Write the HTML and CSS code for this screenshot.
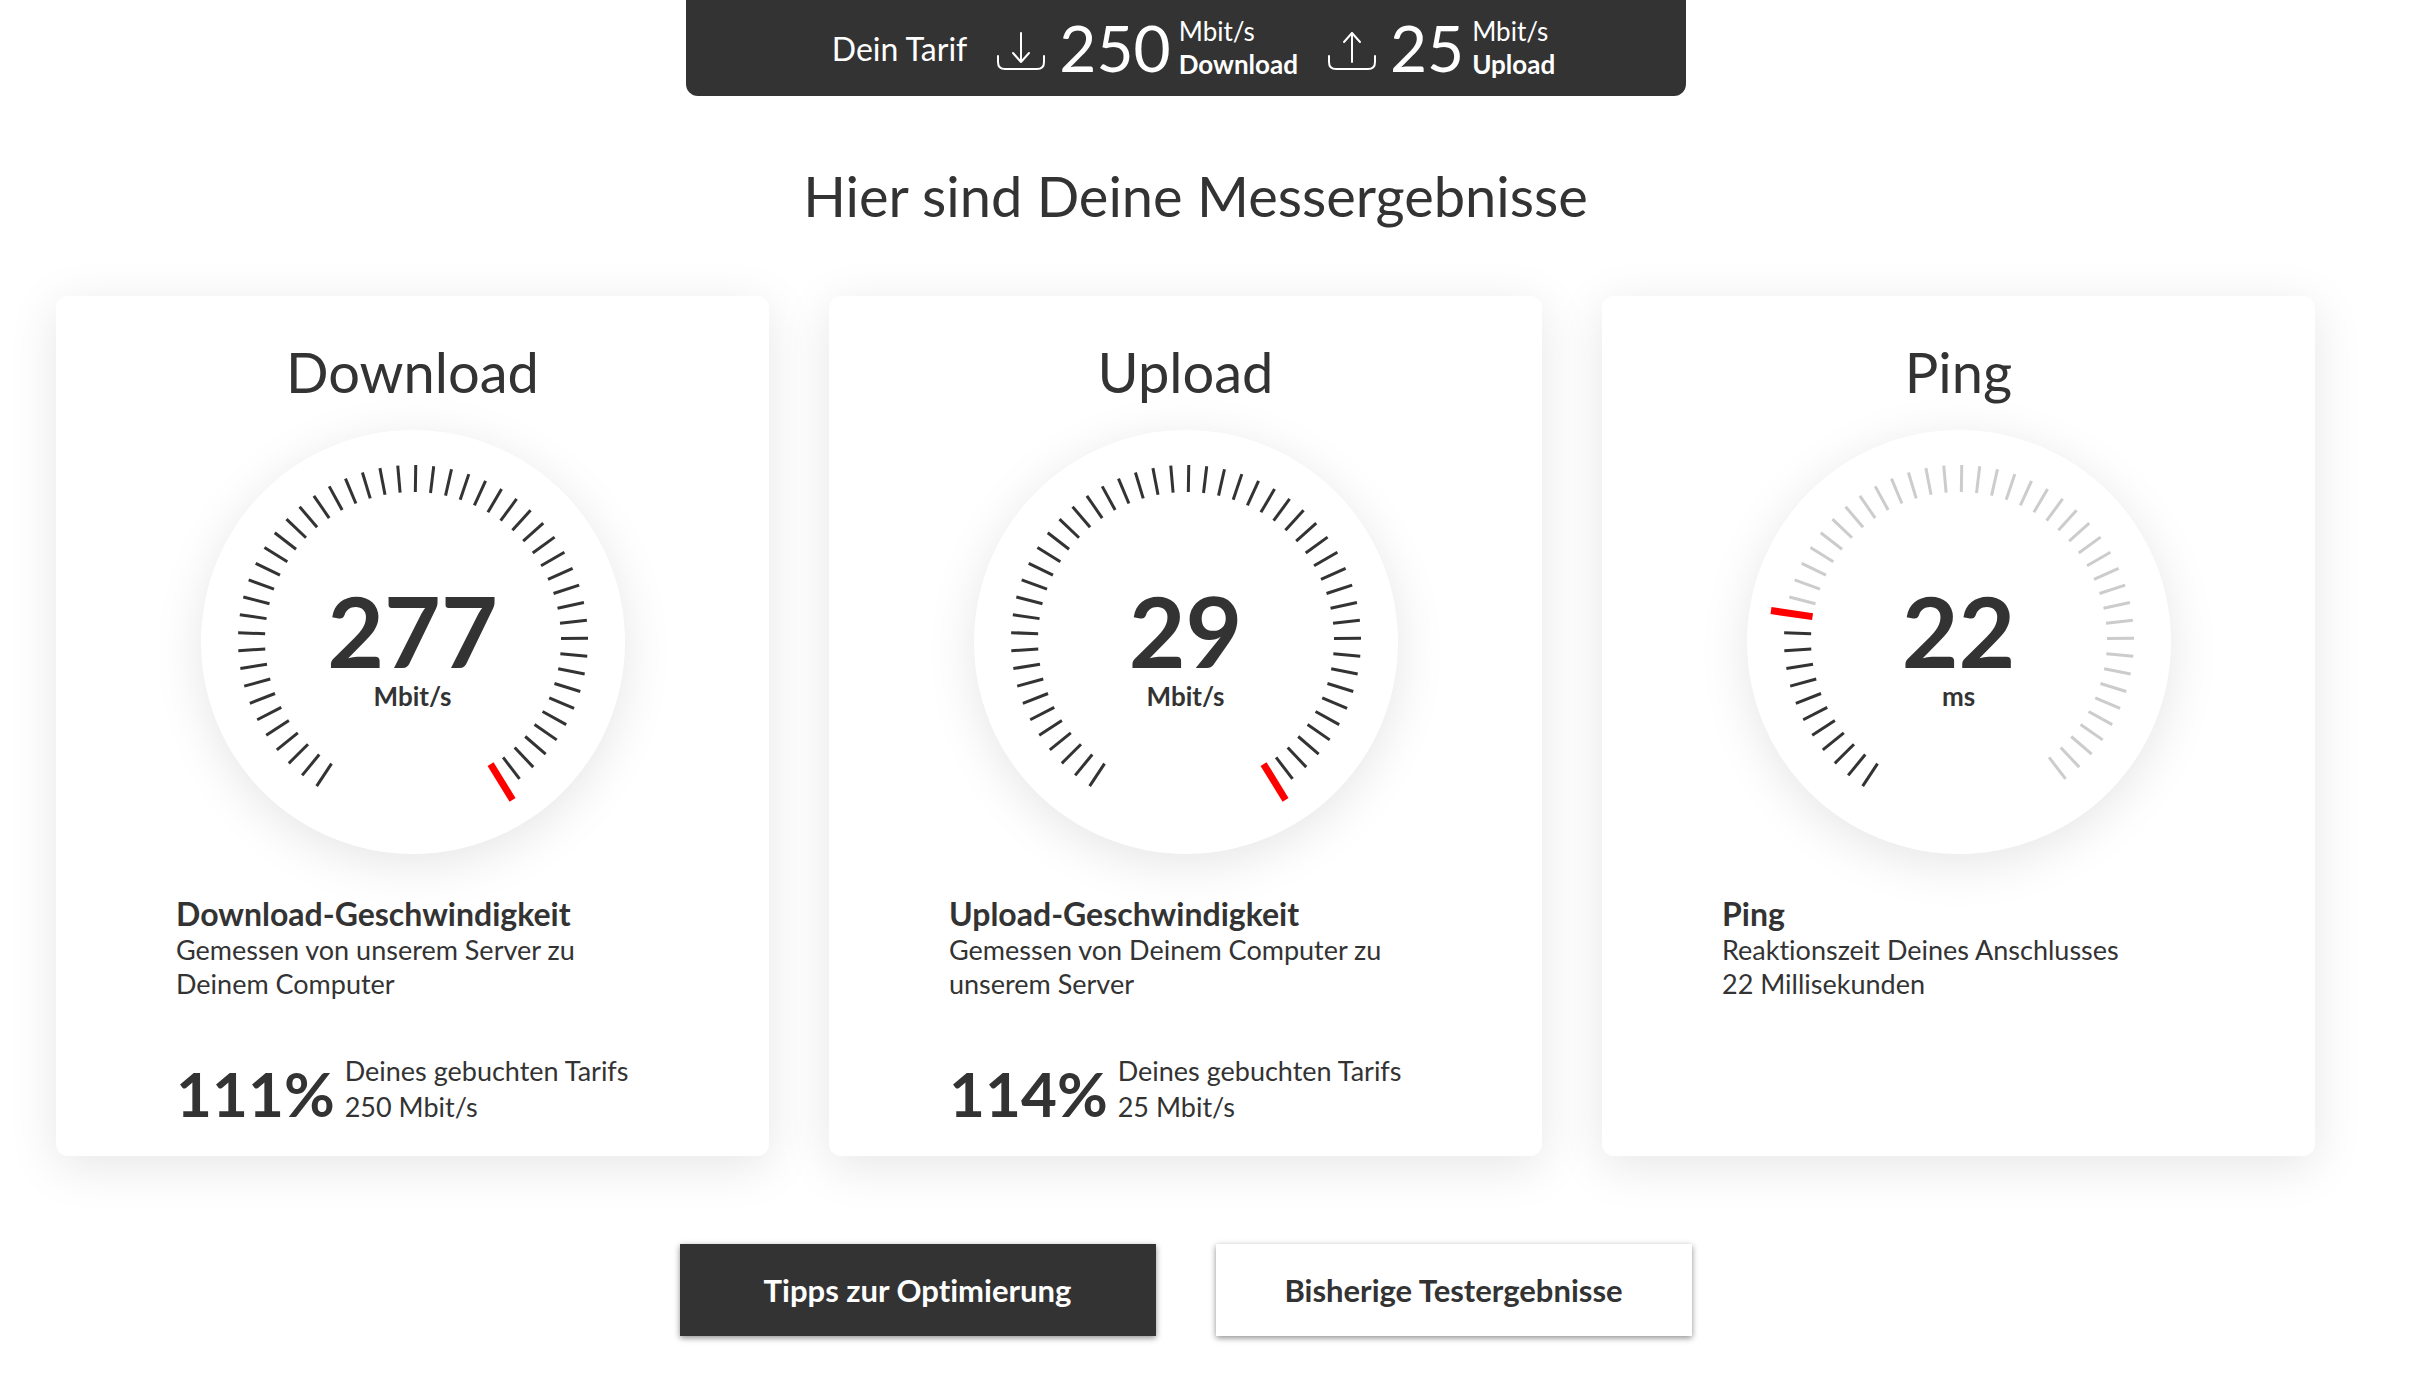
FILE: index.html
```html
<!DOCTYPE html>
<html lang="de">
<head>
  <meta charset="UTF-8">
  <meta name="viewport" content="width=device-width, initial-scale=1.0">
  <title>Speedtest</title>
  <link rel="stylesheet" href="styles.css">
</head>
<body>
  <div class="page">
    <header class="tariff-bar">
      <span class="tariff-label">Dein Tarif</span>
      <div class="tariff-item">
        <svg class="tariff-icon" viewBox="0 0 48 40" aria-hidden="true">
          <path d="M1 25v6q0 7 7 7h32q7 0 7-7v-6M24 2v29M16 22l8 9 8-9"/>
        </svg>
        <span class="tariff-speed">250</span>
        <div class="tariff-unit">Mbit/s<strong>Download</strong></div>
      </div>
      <div class="tariff-item">
        <svg class="tariff-icon" viewBox="0 0 48 40" aria-hidden="true">
          <path d="M1 25v6q0 7 7 7h32q7 0 7-7v-6M24 31V2M16 11l8-9 8 9"/>
        </svg>
        <span class="tariff-speed">25</span>
        <div class="tariff-unit">Mbit/s<strong>Upload</strong></div>
      </div>
    </header>

    <h1>Hier sind Deine Messergebnisse</h1>

    <main class="cards">
      <section class="card">
        <h2>Download</h2>
        <div class="gauge">
          <svg class="dial" viewBox="0 0 424 424" data-value="277" data-max="250" aria-hidden="true"></svg>
          <div class="reading">
            <span class="value">277</span>
            <span class="unit">Mbit/s</span>
          </div>
        </div>
        <div class="info">
          <h3>Download-Geschwindigkeit</h3>
          <p>Gemessen von unserem Server zu Deinem Computer</p>
          <div class="booked">
            <span class="percent">111%</span>
            <span class="booked-text">Deines gebuchten Tarifs<br>250 Mbit/s</span>
          </div>
        </div>
      </section>

      <section class="card">
        <h2>Upload</h2>
        <div class="gauge">
          <svg class="dial" viewBox="0 0 424 424" data-value="29" data-max="25" aria-hidden="true"></svg>
          <div class="reading">
            <span class="value">29</span>
            <span class="unit">Mbit/s</span>
          </div>
        </div>
        <div class="info">
          <h3>Upload-Geschwindigkeit</h3>
          <p>Gemessen von Deinem Computer zu unserem Server</p>
          <div class="booked">
            <span class="percent">114%</span>
            <span class="booked-text">Deines gebuchten Tarifs<br>25 Mbit/s</span>
          </div>
        </div>
      </section>

      <section class="card">
        <h2>Ping</h2>
        <div class="gauge">
          <svg class="dial" viewBox="0 0 424 424" data-value="22" data-max="100" aria-hidden="true"></svg>
          <div class="reading">
            <span class="value">22</span>
            <span class="unit">ms</span>
          </div>
        </div>
        <div class="info">
          <h3>Ping</h3>
          <p>Reaktionszeit Deines Anschlusses<br>22 Millisekunden</p>
        </div>
      </section>
    </main>

    <div class="actions">
      <button type="button" class="btn btn-dark">Tipps zur Optimierung</button>
      <button type="button" class="btn">Bisherige Testergebnisse</button>
    </div>
  </div>

  <script>
    const STEPS = 50;
    const START = -146.6; // Grad, 0 = oben
    const STEP = 5.9;
    const CX = 212;
    const CY = 210;

    document.querySelectorAll('.dial').forEach(dial => {
      const share = Math.min(dial.dataset.value / dial.dataset.max, 1);
      const current = Math.round(share * STEPS);

      for (let i = 0; i <= STEPS; i++) {
        // letzter Strich wird nur als Zeiger gezeichnet
        if (i === STEPS && i !== current) continue;
        const line = document.createElementNS('http://www.w3.org/2000/svg', 'line');
        const needle = i === current;
        const cy = needle ? CY - 2 : CY;
        line.setAttribute('x1', CX);
        line.setAttribute('x2', CX);
        line.setAttribute('y1', cy - 148);
        line.setAttribute('y2', cy - (needle ? 190 : 175));
        line.setAttribute('transform', `rotate(${START + i * STEP} ${CX} ${cy})`);
        line.setAttribute('class', needle ? 'tick needle' : i < current ? 'tick active' : 'tick');
        dial.appendChild(line);
      }
    });
  </script>
</body>
</html>
```
FILE: styles.css
```css
* {
  box-sizing: border-box;
}
body {
  margin: 0;
  font-family: Lato, sans-serif;
  font-variant-ligatures: none;
  color: #333;
  background-color: #fff;
}
h1, h2, h3, p {
  margin: 0;
}
.page {
  margin-right: 55px;
  padding: 0 56px 48px;
}

.tariff-bar {
  display: flex;
  align-items: center;
  justify-content: center;
  gap: 30px;
  max-width: 1000px;
  height: 96px;
  margin: 0 auto;
  padding-left: 16px;
  border-radius: 0 0 12px 12px;
  background-color: #333;
  color: #fff;
}
.tariff-label {
  font-size: 32px;
}
.tariff-item {
  display: flex;
  align-items: center;
}
.tariff-icon {
  width: 48px;
  height: 40px;
  margin: 6px 14px 0 0;
  fill: none;
  stroke: #fff;
  stroke-width: 2;
  stroke-linecap: round;
  stroke-linejoin: round;
}
.tariff-speed {
  margin-right: 8px;
  font-size: 64px;
  line-height: 64px;
}
.tariff-unit {
  font-size: 26px;
  line-height: 33px;
}
.tariff-unit strong {
  display: block;
}

h1 {
  margin: 66px 0;
  padding-left: 20px;
  font-size: 56px;
  font-weight: 400;
  line-height: 68px;
  text-align: center;
}

.cards {
  display: grid;
  grid-template-columns: repeat(3, 1fr);
  gap: 60px;
}
.card {
  padding: 42px 0 31px;
  border-radius: 12px;
  background-color: #fff;
  box-shadow: 0 10px 50px rgba(0, 0, 0, 0.1);
}
.card h2 {
  font-size: 56px;
  font-weight: 400;
  line-height: 68px;
  text-align: center;
}
.gauge {
  position: relative;
  width: 424px;
  height: 424px;
  margin: 24px auto 40px;
  border-radius: 50%;
  background-color: #fff;
  box-shadow: 0 10px 50px rgba(0, 0, 0, 0.1);
}
.dial {
  display: block;
  width: 100%;
}
.tick {
  stroke: #ccc;
  stroke-width: 3;
}
.tick.active {
  stroke: #333;
}
.tick.needle {
  stroke: #f00;
  stroke-width: 7;
}
.reading {
  position: absolute;
  inset: 0;
  display: flex;
  flex-direction: column;
  align-items: center;
  justify-content: center;
  padding-top: 12px;
  font-weight: 700;
}
.value {
  font-size: 98px;
  line-height: 96px;
}
.unit {
  font-size: 26px;
  line-height: 36px;
}

.info {
  padding: 0 120px;
}
.info h3 {
  font-size: 32px;
  line-height: 39px;
}
.info p {
  font-size: 27px;
  line-height: 34px;
}
.booked {
  display: flex;
  align-items: flex-end;
  gap: 10px;
  margin-top: 52px;
}
.percent {
  font-size: 62px;
  font-weight: 700;
  line-height: 64px;
}
.booked-text {
  font-size: 27px;
  line-height: 36px;
  white-space: nowrap;
}

.actions {
  display: flex;
  justify-content: center;
  gap: 60px;
  margin-top: 88px;
}
.btn {
  width: 476px;
  height: 92px;
  border: none;
  background-color: #fff;
  color: #333;
  font-family: inherit;
  font-size: 31px;
  font-weight: 700;
  font-variant-ligatures: none;
  box-shadow: 0 2px 6px rgba(0, 0, 0, 0.45);
  cursor: pointer;
}
.btn-dark {
  background-color: #333;
  color: #fff;
}
```
